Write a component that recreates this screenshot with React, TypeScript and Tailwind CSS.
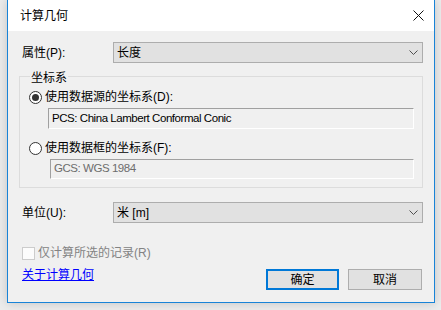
import React from "react";

const font = "font-['Liberation_Sans','Noto_Sans_CJK_SC',sans-serif]";

function Chevron() {
  return (
    <svg width="9" height="5" viewBox="0 0 9 5" className="shrink-0">
      <path d="M0.5 0.5 L4.5 4.5 L8.5 0.5" fill="none" stroke="#505050" strokeWidth="1" />
    </svg>
  );
}

function Combo({ value }: { value: string }) {
  return (
    <div className="flex-1 h-[21px] flex items-center justify-between bg-[#e1e1e1] border border-[#adadad] pl-[3px] pr-[4px]">
      <span className="text-[12px] leading-none text-black">{value}</span>
      <Chevron />
    </div>
  );
}

function Radio({ checked }: { checked?: boolean }) {
  return (
    <div className="w-[13px] h-[13px] rounded-full border border-[#333333] bg-white flex items-center justify-center shrink-0">
      {checked && <div className="w-[7px] h-[7px] rounded-full bg-[#333333]" />}
    </div>
  );
}

export default function App() {
  return (
    <div className={`w-[441px] h-[310px] bg-[#ececec] overflow-hidden ${font}`}>
      <div className="ml-[7px] w-[428px] h-[303px] flex flex-col border-x border-b border-[#1883d7] bg-[#f0f0f0] shadow-[0_0_10px_rgba(0,0,0,0.18)]">
        {/* title bar */}
        <div className="h-[31px] bg-white flex items-center justify-between pl-[12px] pr-[10px] shrink-0">
          <span className="text-[12px] text-black">计算几何</span>
          <svg width="11" height="11" viewBox="0 0 11 11">
            <path d="M0.5 0.5 L10.5 10.5 M10.5 0.5 L0.5 10.5" stroke="#111" strokeWidth="1" />
          </svg>
        </div>

        <div className="flex flex-col px-[11px] pt-[11px]">
          {/* property */}
          <div className="flex items-center">
            <div className="w-[94px] pl-[3px] text-[12px] text-black">属性(P):</div>
            <Combo value="长度" />
          </div>

          {/* coordinate system group */}
          <div className="mt-[13px] border border-[#dcdcdc] flex flex-col pl-[9px] pr-[8px] pb-[8px]">
            <span className="-mt-[7px] ml-[1px] self-start px-[1px] bg-[#f0f0f0] text-[12px] leading-[16px] text-black">坐标系</span>
            <div className="mt-[3px] h-[16px] flex items-center gap-[3px]">
              <Radio checked />
              <span className="text-[12px] text-black">使用数据源的坐标系(D):</span>
            </div>
            <div className="mt-[3px] ml-[19px] h-[21px] flex items-center border-t border-l border-[#a0a0a0] border-b-white border-r-white border-b border-r pl-[3px]">
              <span className="text-[11.5px] tracking-[-0.45px] text-black">PCS: China Lambert Conformal Conic</span>
            </div>
            <div className="mt-[11px] h-[16px] flex items-center gap-[3px]">
              <Radio />
              <span className="text-[12px] text-black">使用数据框的坐标系(F):</span>
            </div>
            <div className="mt-[3px] ml-[21px] h-[20px] flex items-center border-t border-l border-[#a0a0a0] border-b-white border-r-white border-b border-r pl-[3px]">
              <span className="text-[11.5px] tracking-[-0.45px] text-[#6d6d6d]">GCS: WGS 1984</span>
            </div>
          </div>

          {/* units */}
          <div className="mt-[14px] flex items-center">
            <div className="w-[94px] pl-[3px] text-[12px] text-black">单位(U):</div>
            <Combo value="米 [m]" />
          </div>

          {/* selected only */}
          <div className="mt-[22px] h-[16px] flex items-center gap-[3px] pl-[3px]">
            <div className="w-[13px] h-[13px] border border-[#cccccc] bg-[#fcfcfc]" />
            <span className="text-[12px] text-[#838383]">仅计算所选的记录(R)</span>
          </div>

          {/* bottom row */}
          <div className="mt-[8px] flex items-start justify-between">
            <a href="#" className="-mt-[2px] ml-[3px] text-[12px] leading-[16px] text-[#0000ff] underline">
              关于计算几何
            </a>
            <div className="flex gap-[9px] mr-[1px]">
              <button className="w-[73px] h-[21px] border-2 border-[#0078d7] bg-[#e1e1e1] text-[12px] text-black flex items-center justify-center">
                确定
              </button>
              <button className="w-[74px] h-[21px] border border-[#adadad] bg-[#e1e1e1] text-[12px] text-black flex items-center justify-center">
                取消
              </button>
            </div>
          </div>
        </div>
      </div>
    </div>
  );
}
